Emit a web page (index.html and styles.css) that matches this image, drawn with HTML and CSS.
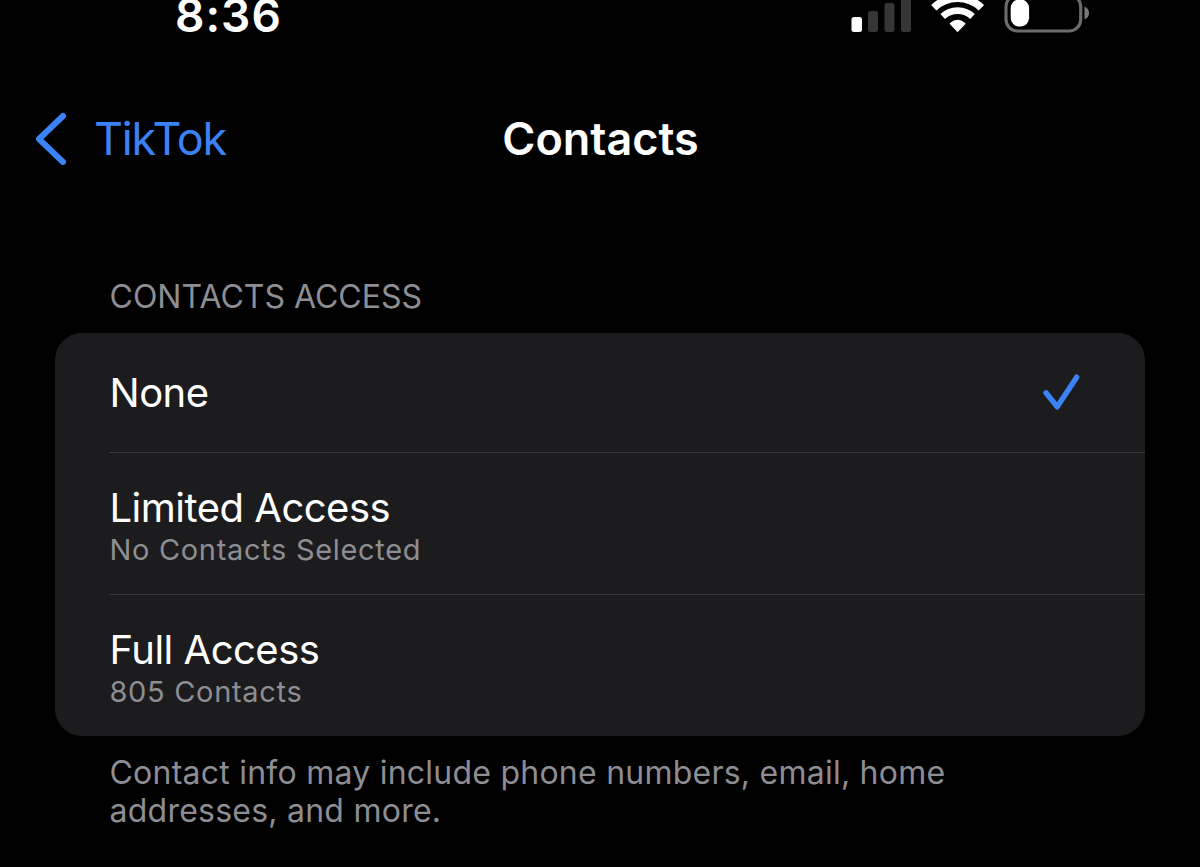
FILE: index.html
```
<!DOCTYPE html>
<html lang="en">
<head>
    <meta charset="UTF-8">
    <meta name="viewport" content="width=device-width, initial-scale=1.0">
    <title>Contacts</title>
    <link rel="stylesheet" href="styles.css">
</head>
<body>
    <div class="status-bar">
        <span class="time">8:36</span>
        <svg class="status-icons" width="240" height="34" viewBox="0 0 240 34">
            <!-- signal -->
            <rect x="1.5" y="17" width="10.5" height="15" rx="2.5" fill="#fff"/>
            <g fill="#363636">
                <rect x="18" y="11" width="10" height="21" rx="2.5"/>
                <rect x="34.5" y="3" width="10" height="29" rx="2.5"/>
                <rect x="51" y="-5" width="10" height="37" rx="2.5"/>
            </g>
            <!-- wifi -->
            <path d="M107.6 31.3 L100.2 23.6 Q107.6 17.3 115 23.6 Z" fill="#fff" stroke="#fff" stroke-width="1.2" stroke-linejoin="round"/>
            <path d="M92.7 16.5 A21.8 21.8 0 0 1 122.5 16.5" fill="none" stroke="#fff" stroke-width="6.8"/>
            <path d="M83.8 7.7 A34.4 34.4 0 0 1 131.4 7.7" fill="none" stroke="#fff" stroke-width="7.6"/>
            <!-- battery -->
            <rect x="156" y="-5" width="74.7" height="36" rx="11.5" fill="none" stroke="#6b6b6b" stroke-width="3.1"/>
            <rect x="160.7" y="-0.5" width="18.4" height="27" rx="8.5" fill="#fff"/>
            <path d="M234.5 6.5 Q239 8.5 239 13 Q239 17.5 234.5 19.5 Z" fill="#7a7a7a"/>
        </svg>
    </div>

    <div class="nav">
        <a class="back" href="#">
            <svg width="34" height="54" viewBox="0 0 34 54">
                <path d="M30 5 L6 28 L30 51" fill="none" stroke="#3b82f7" stroke-width="6" stroke-linecap="round" stroke-linejoin="round"/>
            </svg>
            <span>TikTok</span>
        </a>
        <h1>Contacts</h1>
    </div>

    <div class="section">
        <h2>CONTACTS ACCESS</h2>
        <div class="card">
            <div class="row row-single">
                <div class="title">None</div>
                <svg class="check" width="38" height="38" viewBox="0 0 38 38">
                    <path d="M4 18.8 L15.2 32.8 L34.7 3.2" fill="none" stroke="#3b82f7" stroke-width="5.4" stroke-linecap="round" stroke-linejoin="round"/>
                </svg>
            </div>
            <div class="row">
                <div class="title">Limited Access</div>
                <div class="subtitle">No Contacts Selected</div>
            </div>
            <div class="row">
                <div class="title">Full Access</div>
                <div class="subtitle">805 Contacts</div>
            </div>
        </div>
        <p class="footer">Contact info may include phone numbers, email, home addresses, and more.</p>
    </div>
</body>
</html>
```
FILE: styles.css
```
* {
    box-sizing: border-box;
}

body {
    margin: 0;
    height: 867px;
    overflow: hidden;
    background: #000;
    color: #fff;
    font-family: Inter, "Liberation Sans", sans-serif;
}

.status-bar {
    display: flex;
    justify-content: space-between;
    height: 34px;
    padding: 0 110px 0 175px;
}

.time {
    font-size: 46px;
    font-weight: 600;
    line-height: 31px;
    letter-spacing: 1px;
}

.nav {
    display: grid;
    grid-template-columns: 1fr auto 1fr;
    align-items: center;
    height: 58px;
    margin-top: 75px;
    padding: 0 33px;
}

.back {
    display: flex;
    align-items: center;
    gap: 27px;
    color: #3b82f7;
    font-size: 45px;
    letter-spacing: -1.2px;
    text-decoration: none;
}

h1 {
    margin: 0;
    padding-left: 1px;
    font-size: 45px;
    font-weight: 600;
}

.section {
    margin: 110px 55px 0;
}

h2 {
    margin: 0;
    padding-left: 54.5px;
    color: #8d8d93;
    font-size: 32px;
    font-weight: 400;
    line-height: 40px;
}

.card {
    margin-top: 16px;
    padding-left: 54px;
    border-radius: 27px;
    background: #1c1c1e;
}

.row {
    height: 142px;
    padding: 31px 0 0 0.5px;
}

.row + .row {
    border-top: 1px solid #38383a;
}

.row-single {
    display: flex;
    align-items: center;
    justify-content: space-between;
    height: 119px;
    padding: 0 65px 0 0.5px;
}

.title {
    font-size: 40px;
    line-height: 48px;
    letter-spacing: -0.5px;
}

.subtitle {
    color: #8d8d93;
    font-size: 29px;
    line-height: 36px;
    letter-spacing: 0.68px;
}

.footer {
    margin: 18px 0 0;
    padding: 0 54.5px;
    max-width: 960px;
    color: #8d8d93;
    font-size: 32px;
    line-height: 38px;
    letter-spacing: 0.24px;
}
```
